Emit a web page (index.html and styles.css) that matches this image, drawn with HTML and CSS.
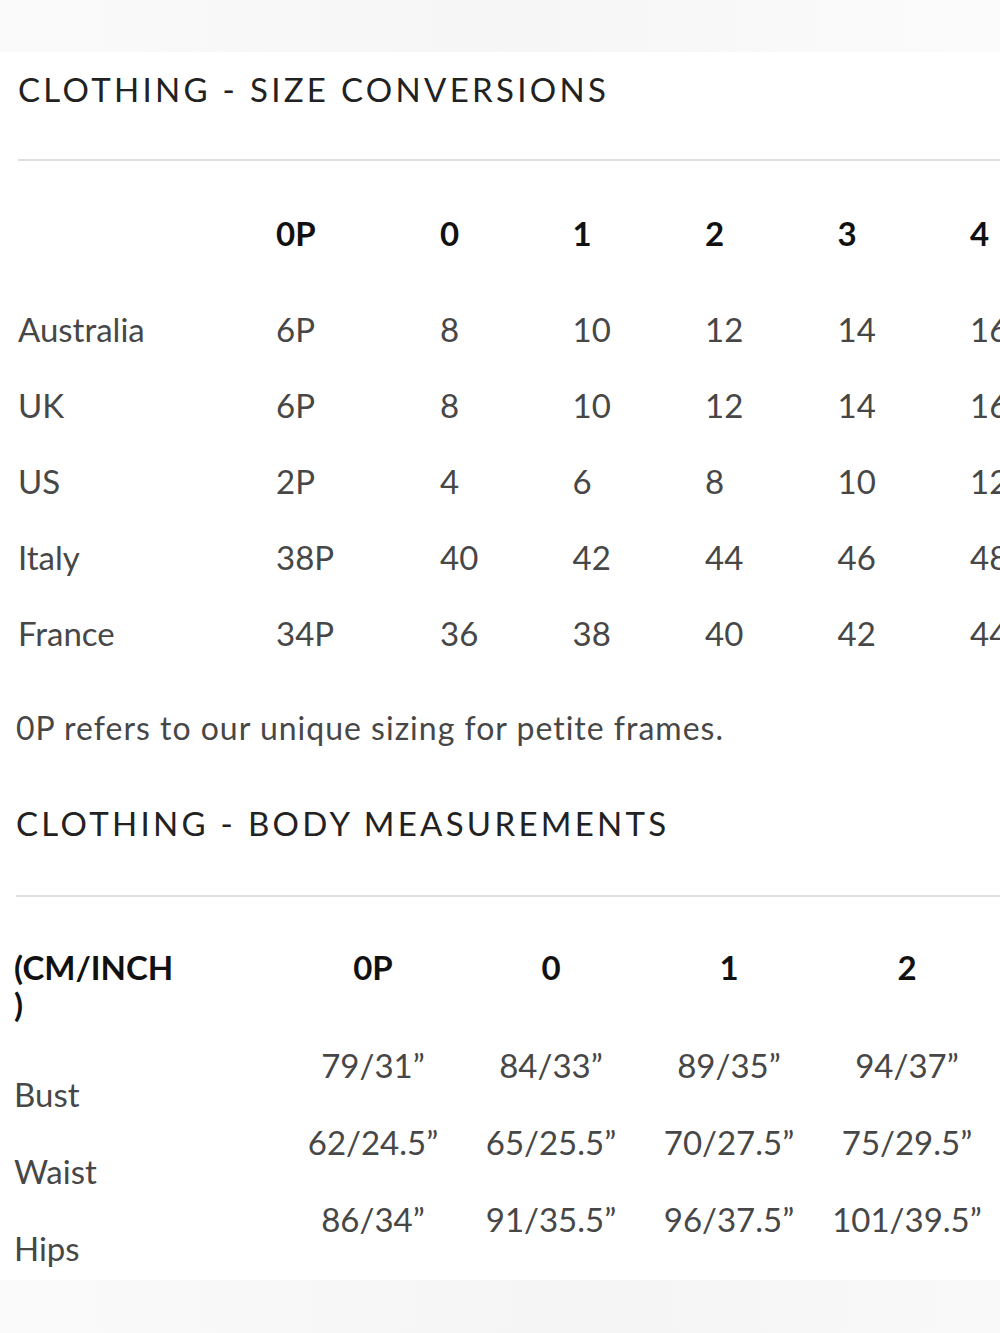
FILE: index.html
```html
<!DOCTYPE html>
<html lang="en">
<head>
<meta charset="utf-8">
<title>Size Guide</title>
<link rel="stylesheet" href="styles.css">
</head>
<body>
<div class="page">
  <div class="band band-top"></div>
  <main class="content">
    <h2 class="section-title title-first">CLOTHING - SIZE CONVERSIONS</h2>
    <hr class="divider">
    <table class="conv">
      <colgroup>
        <col class="c-label"><col class="c-first"><col class="c-std"><col class="c-std"><col class="c-std"><col class="c-std"><col class="c-std">
      </colgroup>
      <thead>
        <tr><th></th><th>0P</th><th>0</th><th>1</th><th>2</th><th>3</th><th>4</th></tr>
      </thead>
      <tbody>
        <tr><td>Australia</td><td>6P</td><td>8</td><td>10</td><td>12</td><td>14</td><td>16</td></tr>
        <tr><td>UK</td><td>6P</td><td>8</td><td>10</td><td>12</td><td>14</td><td>16</td></tr>
        <tr><td>US</td><td>2P</td><td>4</td><td>6</td><td>8</td><td>10</td><td>12</td></tr>
        <tr><td>Italy</td><td>38P</td><td>40</td><td>42</td><td>44</td><td>46</td><td>48</td></tr>
        <tr><td>France</td><td>34P</td><td>36</td><td>38</td><td>40</td><td>42</td><td>44</td></tr>
      </tbody>
    </table>
    <p class="note">0P refers to our unique sizing for petite frames.</p>
    <h2 class="section-title title-second">CLOTHING - BODY MEASUREMENTS</h2>
    <hr class="divider divider-second">
    <table class="body">
      <colgroup>
        <col class="b-label"><col class="b-std"><col class="b-std"><col class="b-std"><col class="b-std">
      </colgroup>
      <thead>
        <tr><th class="unit-cell"><span class="unit">(CM/INCH )</span></th><th>0P</th><th>0</th><th>1</th><th>2</th></tr>
      </thead>
      <tbody>
        <tr><td class="row-label">Bust</td><td>79/31”</td><td>84/33”</td><td>89/35”</td><td>94/37”</td></tr>
        <tr><td class="row-label">Waist</td><td>62/24.5”</td><td>65/25.5”</td><td>70/27.5”</td><td>75/29.5”</td></tr>
        <tr><td class="row-label">Hips</td><td>86/34”</td><td>91/35.5”</td><td>96/37.5”</td><td>101/39.5”</td></tr>
      </tbody>
    </table>
  </main>
  <div class="band band-bottom"></div>
</div>
</body>
</html>
```
FILE: styles.css
```css
html, body {
  margin: 0;
  padding: 0;
  background: #ffffff;
}
body {
  font-family: Lato, "Open Sans", "Liberation Sans", sans-serif;
  color: #474747;
}
.page {
  width: 1000px;
  height: 1333px;
  overflow: hidden;
  display: flex;
  flex-direction: column;
}
.band {
  flex: none;
  background: #f8f8f8;
}
.band-top {
  height: 52px;
  background: linear-gradient(90deg, #fafafa 0%, #f6f6f6 50%, #fbfbfb 100%);
}
.content {
  flex: 1;
  padding-left: 18px;
  overflow: hidden;
}
.band-bottom {
  height: 53px;
  background: linear-gradient(90deg, #fafafa 0%, #f5f5f5 60%, #f9f9f9 100%);
}
.section-title {
  margin: 0;
  font-size: 33px;
  font-weight: 400;
  letter-spacing: 3.3px;
  line-height: 40px;
  color: #222222;
  white-space: nowrap;
}
.title-first {
  margin-top: 17px;
}
.title-second {
  margin-top: 55px;
  margin-left: -2px;
}
.divider {
  border: 0;
  height: 2px;
  background: #dedede;
  margin: 50px 0 0 0;
}
.divider-second {
  margin-top: 52px;
  margin-left: -2px;
}
table {
  border-collapse: collapse;
  table-layout: fixed;
  font-size: 33px;
}
.conv {
  width: 1050px;
  margin-top: 34px;
}
.c-label { width: 258px; }
.c-first { width: 164px; }
.c-std { width: 132.5px; }
.conv th, .conv td {
  padding: 0;
  height: 76px;
  line-height: 40px;
  text-align: left;
  vertical-align: middle;
  white-space: nowrap;
}
.conv th {
  font-weight: 700;
  color: #111111;
  height: 96px;
  padding-bottom: 20px;
  box-sizing: border-box;
}
.note {
  margin: 37px 0 0 -2px;
  font-size: 32px;
  line-height: 40px;
  letter-spacing: 1px;
}
.body {
  width: 982px;
  margin-top: 52px;
  margin-left: -4px;
}
.b-label { width: 270px; }
.b-std { width: 178px; }
.body th, .body td {
  padding: 0;
  text-align: center;
  vertical-align: top;
  white-space: nowrap;
}
.body th {
  font-weight: 700;
  color: #111111;
  line-height: 37px;
  padding-bottom: 22px;
}
.body th.unit-cell {
  text-align: left;
}
.unit {
  display: block;
  width: 175px;
  white-space: normal;
}
.body td {
  line-height: 40px;
  padding-bottom: 37px;
}
.body td.row-label {
  text-align: left;
  padding-top: 29px;
  padding-bottom: 8px;
}
```
